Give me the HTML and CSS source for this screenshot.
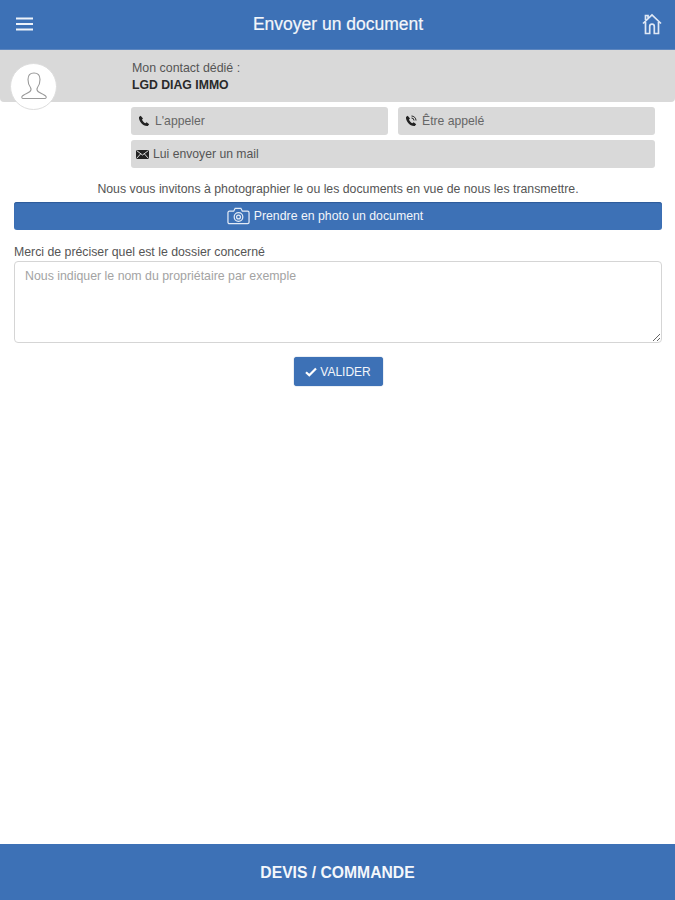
FILE: index.html
```html
<!DOCTYPE html>
<html lang="fr">
<head>
<meta charset="utf-8">
<title>Envoyer un document</title>
<link rel="stylesheet" href="styles.css">
</head>
<body>
<div class="app">
  <header class="topbar">
    <svg class="icon-menu" viewBox="0 0 18 14" width="18" height="14"><path d="M0 1.500h17M0 7h17M0 12.500h17" stroke="#eef3fa" stroke-width="2.200" fill="none"/></svg>
    <h1 class="title">Envoyer un document</h1>
    <svg class="icon-home" viewBox="0 0 20 22" width="20" height="22" fill="none" stroke="#dfe8f5" stroke-width="1.700"><path d="M1 10.500 10 2l9 8.500M3.500 9v11.500h4.200v-7a2.300 2.300 0 0 1 4.600 0v7h4.200V9M3.500 7V2.500h2.500v2.200"/></svg>
  </header>
  <section class="contact">
    <div class="avatar">
      <svg viewBox="0 0 28 32" width="28" height="32" fill="none" stroke="#9a9a9a" stroke-width="1.100"><path d="M14 2c-4 0-6 2.600-6 6.500 0 3 .8 6 2.500 8 .6 1 .5 3-.5 4-1.500 1.500-7 3-8 5-.5 1 0 2 1 2h22c1 0 1.500-1 1-2-1-2-6.500-3.500-8-5-1-1-1.100-3-.5-4 1.700-2 2.500-5 2.500-8C20 4.600 18 2 14 2Z"/></svg>
    </div>
    <div class="contact-text">
      <div class="contact-label">Mon contact dédié :</div>
      <div class="contact-name">LGD DIAG IMMO</div>
    </div>
  </section>
  <div class="actions">
    <a class="action">
      <svg viewBox="0 0 12 12" width="12" height="12"><path d="M2.700.8 1 2c-.5 4 4 9.500 8.800 9l1.400-1.700-2.600-2-1.200 1C6 7.800 4.500 6 4 4.500l1-1.100Z" fill="#222"/></svg>
      L'appeler
    </a>
    <a class="action">
      <svg viewBox="0 0 12 12" width="12" height="12"><path d="M2.700.8 1 2c-.5 4 4 9.500 8.800 9l1.400-1.700-2.600-2-1.200 1C6 7.800 4.500 6 4 4.500l1-1.100Z" fill="#222"/><path d="M6.500 1a4.500 4.500 0 0 1 4.500 4.500M6.500 3a2.500 2.500 0 0 1 2.500 2.500" stroke="#222" fill="none"/></svg>
      Être appelé
    </a>
    <a class="action action-wide">
      <svg viewBox="0 0 13 11" width="13" height="11"><path d="M0 1h13v9H0Z" fill="#222"/><path d="M0.500 1.500 6.500 6l6-4.500M0.500 9.500l4-4.500M12.500 9.500l-4-4.500" stroke="#d9d9d9" fill="none"/></svg>
      Lui envoyer un mail
    </a>
  </div>
  <main class="content">
    <p class="intro">Nous vous invitons à photographier le ou les documents en vue de nous les transmettre.</p>
    <button class="photo-btn" type="button">
      <svg viewBox="0 0 24 18" width="23" height="18" fill="none" stroke="#e3ebf6" stroke-width="1.300"><path d="M2.500 4H7l1.500-3h6L16 4h5.500A1.500 1.500 0 0 1 23 5.500v10a1.500 1.500 0 0 1-1.500 1.500h-19A1.500 1.500 0 0 1 1 15.500v-10A1.500 1.500 0 0 1 2.500 4Z"/><circle cx="12" cy="10" r="4.500"/><circle cx="12" cy="10" r="2"/></svg>
      Prendre en photo un document
    </button>
    <label class="field-label" for="dossier">Merci de préciser quel est le dossier concerné</label>
    <textarea class="field" id="dossier" placeholder="Nous indiquer le nom du propriétaire par exemple"></textarea>
    <button class="submit" type="button">
      <svg viewBox="0 0 12 10" width="12" height="10"><path d="M1 5.200 4.300 8.300 11 1.500" stroke="#fff" stroke-width="2.200" fill="none"/></svg>
      VALIDER
    </button>
  </main>
  <footer class="bottombar">DEVIS / COMMANDE</footer>
</div>
</body>
</html>
```
FILE: styles.css
```css
* { box-sizing: border-box; }
html, body { margin: 0; height: 100%; }
body { font-family: "Liberation Sans", Arial, sans-serif; color: #333; background: #fff; }
.app { height: 900px; display: flex; flex-direction: column; }
.topbar {
  height: 50px; flex: none; background: #3d71b6; color: #f4f7fb;
  display: flex; align-items: center; justify-content: space-between;
  padding: 0 13px 0 16px; border-bottom: 1px solid #5d86bf;
}
.title { margin: 0; font-size: 17.500px; font-weight: 400; -webkit-text-stroke: 0.2px #f4f7fb; }
.icon-menu { margin-bottom: 2px; }
.icon-home { margin-bottom: 1px; }
.contact {
  height: 52px; flex: none; background: #d9d9d9; border-radius: 0 0 4px 4px;
  padding: 11px 0 0 132px; position: relative;
}
.avatar {
  position: absolute; left: 10px; top: 13px; width: 47px; height: 47px;
  background: #fff; border: 1px solid #ddd; border-radius: 50%;
  display: flex; align-items: center; justify-content: center;
}
.contact-label { font-size: 12.400px; line-height: 15px; color: #555; }
.contact-name { font-size: 12.250px; line-height: 18px; font-weight: 700; color: #2a2a2a; }
.actions {
  margin: 5px 21px 0 131px; display: grid; grid-template-columns: 257px 257px;
  column-gap: 10px; row-gap: 5px;
}
.action {
  height: 28px; background: #d9d9d9; border-radius: 3px; font-size: 12.200px; color: #666;
  display: flex; align-items: center; gap: 5px; padding: 0 7px;
}
.action-wide { grid-column: 1 / 3; color: #555; gap: 4px; padding: 0 5px; }
.content { flex: 1; padding: 0 13px 0 14px; display: flex; flex-direction: column; }
.intro { margin: 14px 0 0; font-size: 12.300px; line-height: 15px; text-align: center; color: #555; }
.photo-btn {
  margin-top: 5px; height: 28px; border: 0; border-radius: 3px; background: #3d71b6;
  color: #f2f5fa; font: 12.300px "Liberation Sans", Arial, sans-serif;
  display: flex; align-items: center; justify-content: center; gap: 4px; padding: 0 26px 0 0;
  box-shadow: 0 1px 1px #2d5a98 inset;
}
.field-label { margin-top: 14px; font-size: 12.300px; line-height: 16px; color: #555; }
.field {
  display: block; margin-top: 1px; width: 100%; height: 82px; padding: 7px 10px;
  border: 1px solid #d5d5d5; border-radius: 4px;
  font: 12.350px "Liberation Sans", Arial, sans-serif; color: #333; outline: none;
}
.field::placeholder { color: #a3a3a3; opacity: 1; }
.submit {
  align-self: center; margin-top: 14px; width: 89px; height: 29px; border: 0; border-radius: 3px;
  background: #3d71b6; color: #f2f5fa; font: 12px "Liberation Sans", Arial, sans-serif;
  display: flex; align-items: center; justify-content: center; gap: 3px; padding: 0;
  box-shadow: 0 0 1px #2d5a98;
}
.bottombar {
  height: 56px; flex: none; background: #3d71b6; color: #f4f7fb; font-size: 15.700px; font-weight: 700;
  display: flex; align-items: center; justify-content: center; padding-top: 1px;
}
```
